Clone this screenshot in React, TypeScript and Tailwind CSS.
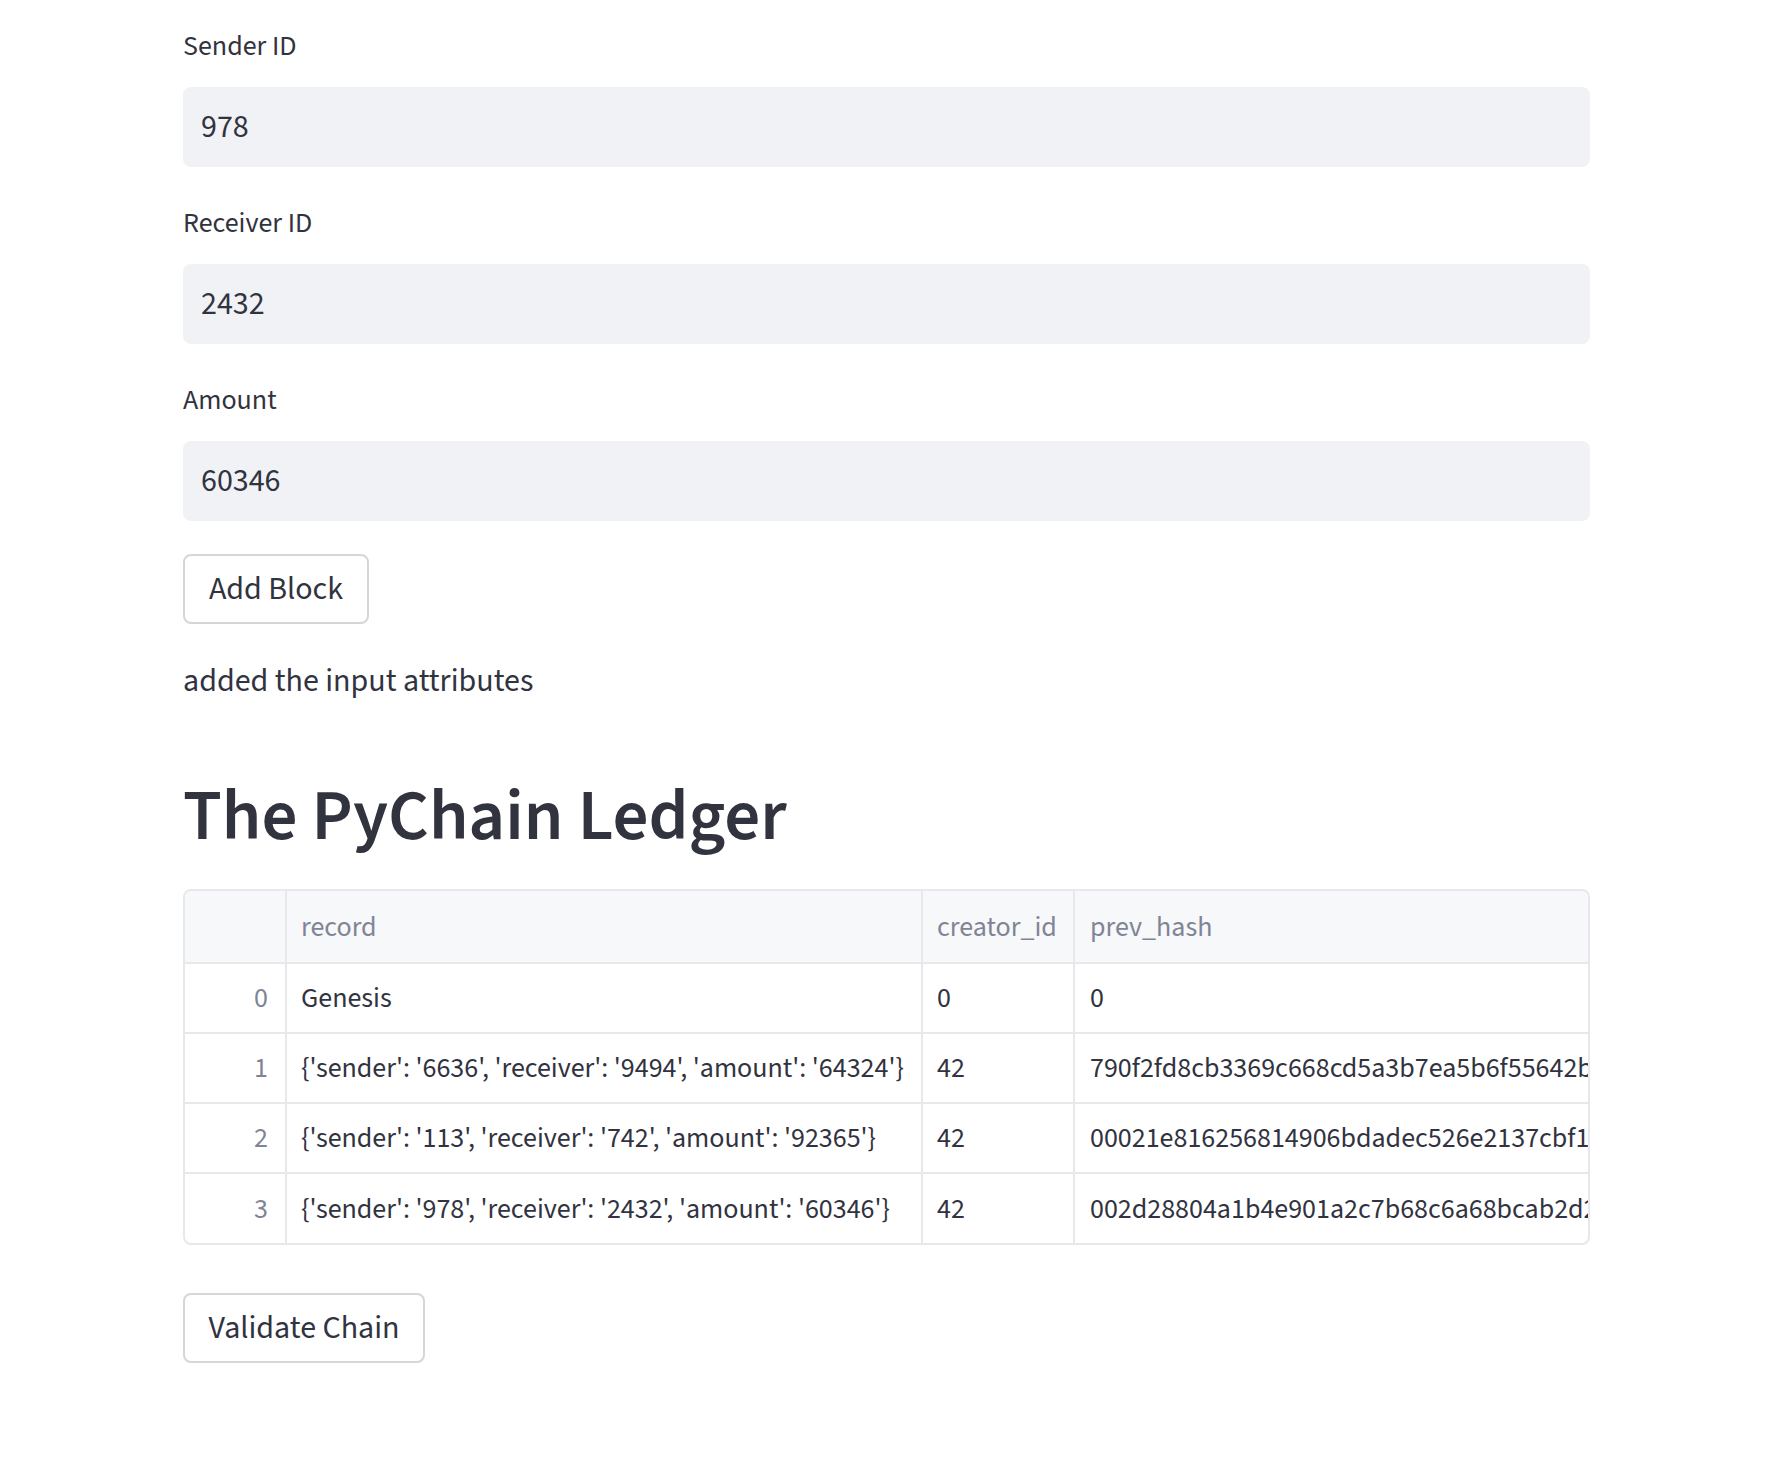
import React from 'react';

const font = { fontFamily: '"Source Sans Pro", "Source Sans 3", Lato, "Noto Sans", sans-serif' };

const rows = [
  { idx: 0, record: 'Genesis', creator: '0', hash: '0' },
  {
    idx: 1,
    record: "{'sender': '6636', 'receiver': '9494', 'amount': '64324'}",
    creator: '42',
    hash: '790f2fd8cb3369c668cd5a3b7ea5b6f55642b1e0a4c7d93f2b8e61a05c4d7f92',
  },
  {
    idx: 2,
    record: "{'sender': '113', 'receiver': '742', 'amount': '92365'}",
    creator: '42',
    hash: '00021e816256814906bdadec526e2137cbf1a7d35c09e4b2f61d8a03e5b7c942',
  },
  {
    idx: 3,
    record: "{'sender': '978', 'receiver': '2432', 'amount': '60346'}",
    creator: '42',
    hash: '002d28804a1b4e901a2c7b68c6a68bcab2d2f93e1c07a5d48b6e20f1c3d9a857',
  },
];

const Field: React.FC<{ label: string; value: string }> = ({ label, value }) => (
  <div className="flex flex-col">
    <label className="text-[28px] leading-[36px] text-[#31333f]">{label}</label>
    <div className="mt-[23px] h-[80px] rounded-[8px] bg-[#f0f2f6] px-[18px] flex items-center text-[32px] text-[#31333f]">
      {value}
    </div>
  </div>
);

const Button: React.FC<{ label: string; w: string }> = ({ label, w }) => (
  <button
    className={`${w} h-[70px] rounded-[8px] border-2 border-[#d6d6d9] bg-white text-[32px] text-[#31333f] flex items-center justify-center`}
  >
    {label}
  </button>
);

export default function App() {
  return (
    <div className="min-h-screen bg-white" style={font}>
      <div className="w-[1407px] ml-[183px] pt-[28px] pb-[110px] flex flex-col">
        <div className="flex flex-col gap-[38px]">
          <Field label="Sender ID" value="978" />
          <Field label="Receiver ID" value="2432" />
          <Field label="Amount" value="60346" />
        </div>

        <div className="mt-[33px]">
          <Button label="Add Block" w="w-[186px]" />
        </div>

        <p className="mt-[33px] text-[32px] leading-[48px] text-[#31333f]">added the input attributes</p>

        <h1 className="mt-[69px] text-[71px] leading-[86px] font-semibold text-[#31333f]">The PyChain Ledger</h1>

        <div className="mt-[29px] rounded-[8px] border-2 border-[#e6e8ec] overflow-hidden">
          <table className="w-full table-fixed border-collapse text-[28px] text-[#31333f]">
            <colgroup>
              <col className="w-[101px]" />
              <col className="w-[636px]" />
              <col className="w-[152px]" />
              <col />
            </colgroup>
            <thead>
              <tr className="h-[72px] bg-[#f7f8fa] text-[#808495]">
                <th className="border-r-2 border-b-2 border-[#e6e8ec]"></th>
                <th className="border-r-2 border-b-2 border-[#e6e8ec] px-[14px] text-left font-normal">record</th>
                <th className="border-r-2 border-b-2 border-[#e6e8ec] px-[14px] text-left font-normal whitespace-nowrap">
                  creator_id
                </th>
                <th className="border-b-2 border-[#e6e8ec] px-[15px] text-left font-normal">prev_hash</th>
              </tr>
            </thead>
            <tbody>
              {rows.map((r, i) => (
                <tr key={r.idx} className="h-[70px]">
                  <td
                    className={`border-r-2 border-[#e6e8ec] ${i < rows.length - 1 ? 'border-b-2' : ''} px-[17px] text-right text-[#808495]`}
                  >
                    {r.idx}
                  </td>
                  <td
                    className={`border-r-2 border-[#e6e8ec] ${i < rows.length - 1 ? 'border-b-2' : ''} px-[14px] whitespace-nowrap overflow-hidden`}
                  >
                    {r.record}
                  </td>
                  <td
                    className={`border-r-2 border-[#e6e8ec] ${i < rows.length - 1 ? 'border-b-2' : ''} px-[14px]`}
                  >
                    {r.creator}
                  </td>
                  <td
                    className={`border-[#e6e8ec] ${i < rows.length - 1 ? 'border-b-2' : ''} pl-[15px] whitespace-nowrap overflow-hidden`}
                  >
                    {r.hash}
                  </td>
                </tr>
              ))}
            </tbody>
          </table>
        </div>

        <div className="mt-[48px]">
          <Button label="Validate Chain" w="w-[242px]" />
        </div>
      </div>
    </div>
  );
}
